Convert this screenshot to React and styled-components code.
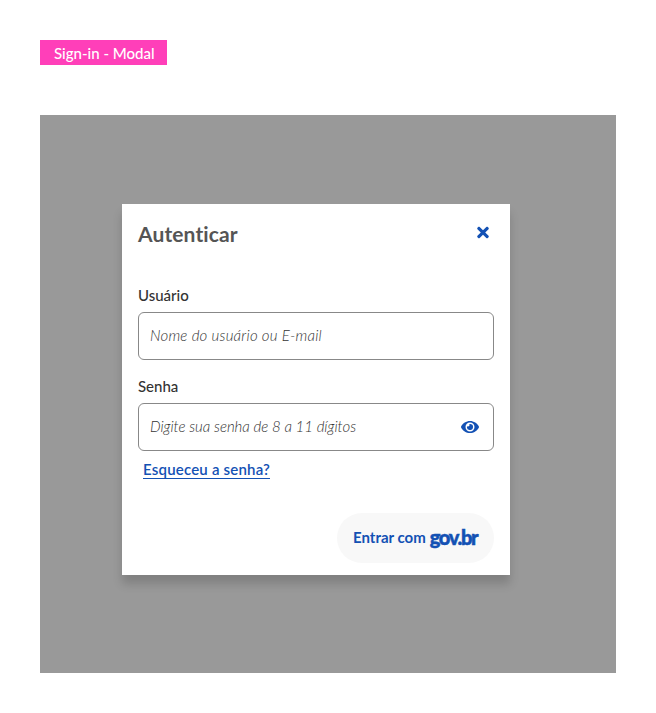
import React from "react";
import styled, { createGlobalStyle } from "styled-components";
import { FaEye, FaTimes } from "react-icons/fa";

const GlobalStyle = createGlobalStyle`
  *, *::before, *::after { box-sizing: border-box; }
  body {
    margin: 0;
    background: #fff;
    color: #333;
    font: 500 15px/18px Lato, "Open Sans", sans-serif;
    font-variant-ligatures: none;
  }
  button, input { font: inherit; }
`;

const Page = styled.main`
  display: flex;
  flex-direction: column;
  align-items: flex-start;
  gap: 50px;
  height: 713px;
  padding: 40px;
`;

const Tag = styled.div`
  width: 127px;
  height: 25px;
  padding: 4px 0 0 14px;
  background: #ff3fb9;
  color: #fff;
  white-space: nowrap;
`;

const Scrim = styled.section`
  width: 576px;
  height: 558px;
  padding: 89px 0 0 82px;
  background: #999;
`;

const Modal = styled.form`
  display: flex;
  flex-direction: column;
  width: 388px;
  height: 371px;
  padding: 16px 16px 12px;
  background: #fff;
  box-shadow: 0 9px 9px rgba(0, 0, 0, 0.16);
`;

const Header = styled.header`
  display: flex;
  justify-content: space-between;
  height: 66px;
`;

const Title = styled.h1`
  margin: 0;
  color: #555;
  font-size: 21px;
  font-weight: 700;
  letter-spacing: 0.12px;
  line-height: 27px;
`;

const CloseButton = styled.button`
  display: flex;
  align-items: center;
  justify-content: center;
  width: 23px;
  height: 24px;
  padding: 0;
  border: 0;
  background: none;
  color: #1351b4;
  svg { width: 12px; height: 17px; }
`;

const Field = styled.div`
  display: flex;
  flex-direction: column;
  gap: 6px;
  margin-bottom: 17px;
`;

const Label = styled.label`
  height: 20px;
`;

const InputBox = styled.div`
  display: flex;
  align-items: center;
  height: 48px;
  padding: 0 14px 0 11px;
  border: 1px solid #888;
  border-radius: 6px;
  color: #1351b4;
  svg { flex: none; width: 18px; height: 16px; }
`;

const Input = styled.input`
  flex: 1;
  min-width: 0;
  padding: 0 0 2px;
  border: 0;
  outline: 0;
  background: none;
  &::placeholder {
    color: #333;
    opacity: 1;
    font-style: italic;
    font-weight: 300;
    letter-spacing: ${({ $tracking }) => $tracking};
  }
`;

const ForgotLink = styled.a`
  align-self: flex-start;
  width: 127px;
  height: 19px;
  margin: -8px 0 0 5px;
  border-bottom: 1px solid #1351b4;
  color: #1351b4;
  font-weight: 600;
  letter-spacing: 0.2px;
  text-decoration: none;
  white-space: nowrap;
`;

const SignInButton = styled.button`
  display: flex;
  align-items: center;
  align-self: flex-end;
  gap: 4px;
  width: 157px;
  height: 50px;
  margin-top: auto;
  padding: 0 0 2px 16px;
  border: 0;
  border-radius: 25px;
  background: #f8f8f8;
  color: #1351b4;
  font-weight: 700;
  white-space: nowrap;
`;

const Brand = styled.span`
  padding-bottom: 1px;
  font-size: 20px;
  font-weight: 900;
  letter-spacing: -1.3px;
  -webkit-text-stroke: 0.5px currentColor;
`;

export default function App() {
  return (
    <>
      <GlobalStyle />
      <Page>
        <Tag>Sign-in - Modal</Tag>
        <Scrim>
          <Modal>
            <Header>
              <Title>Autenticar</Title>
              <CloseButton type="button" aria-label="Fechar"><FaTimes /></CloseButton>
            </Header>
            <Field>
              <Label htmlFor="user">Usuário</Label>
              <InputBox>
                <Input id="user" $tracking="0.23px" placeholder="Nome do usuário ou E-mail" />
              </InputBox>
            </Field>
            <Field>
              <Label htmlFor="password">Senha</Label>
              <InputBox>
                <Input id="password" type="password" $tracking="-0.03px" placeholder="Digite sua senha de 8 a 11 dígitos" />
                <FaEye />
              </InputBox>
            </Field>
            <ForgotLink href="#">Esqueceu a senha?</ForgotLink>
            <SignInButton type="button"><span>Entrar com</span><Brand>gov.br</Brand></SignInButton>
          </Modal>
        </Scrim>
      </Page>
    </>
  );
}
